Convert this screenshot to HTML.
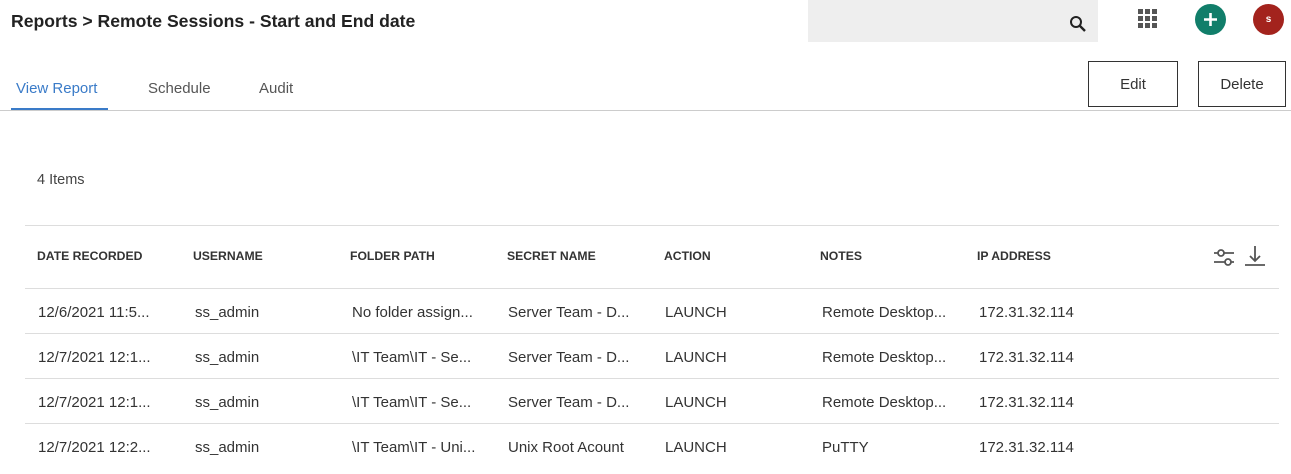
<!DOCTYPE html>
<html><head><style>
body{margin:0;width:1291px;height:474px;background:#fff;font-family:"Liberation Sans",Arial,sans-serif;position:relative;overflow:hidden;color:#222}
.a{position:absolute;white-space:nowrap}
.h{font-size:12.2px;font-weight:bold;color:#333;top:249px}
.d{font-size:15px;color:#333}
.line{position:absolute;left:25px;width:1254px;height:1px;background:#ddd}
.btn{position:absolute;top:61px;height:46px;border:1px solid #333;box-sizing:border-box;font-size:15px;display:flex;align-items:center;justify-content:center;color:#333}
</style></head><body>
<div class="a" style="left:11px;top:11px;font-size:17.6px;font-weight:bold;color:#222">Reports &gt; Remote Sessions - Start and End date</div>
<div class="a" style="left:808px;top:0;width:290px;height:42px;background:#eee"></div>
<svg class="a" style="left:1069px;top:15px" width="18" height="18" viewBox="0 0 18 18"><circle cx="7" cy="7" r="5" fill="none" stroke="#222" stroke-width="2"/><path d="M10.5 10.5L16 16" stroke="#222" stroke-width="2.4"/></svg>
<svg class="a" style="left:1138px;top:9px" width="20" height="20"><g fill="#555"><rect x="0" y="0" width="5" height="5"/><rect x="7" y="0" width="5" height="5"/><rect x="14" y="0" width="5" height="5"/><rect x="0" y="7" width="5" height="5"/><rect x="7" y="7" width="5" height="5"/><rect x="14" y="7" width="5" height="5"/><rect x="0" y="14" width="5" height="5"/><rect x="7" y="14" width="5" height="5"/><rect x="14" y="14" width="5" height="5"/></g></svg>
<div class="a" style="left:1195px;top:4px;width:31px;height:31px;border-radius:50%;background:#117e6a"></div>
<svg class="a" style="left:1195px;top:4px" width="31" height="31"><path d="M15.5 9v13M9 15.5h13" stroke="#fff" stroke-width="2.6"/></svg>
<div class="a" style="left:1253px;top:4px;width:31px;height:31px;border-radius:50%;background:#a3231d;color:#fff;font-size:10px;font-weight:bold;text-align:center;line-height:31px">s</div>
<div class="a" style="left:16px;top:80px;font-size:15px;color:#3a7bc8">View Report</div>
<div class="a" style="left:11px;top:108px;width:97px;height:3px;background:#3a7bc8"></div>
<div class="a" style="left:148px;top:80px;font-size:15px;color:#555">Schedule</div>
<div class="a" style="left:259px;top:80px;font-size:15px;color:#555">Audit</div>
<div class="a" style="left:0;top:110px;width:1291px;height:1px;background:#ccc"></div>
<div class="btn" style="left:1088px;width:90px">Edit</div>
<div class="btn" style="left:1198px;width:88px">Delete</div>
<div class="a" style="left:37px;top:172px;font-size:14.5px;color:#444">4 Items</div>
<div class="line" style="top:225px"></div>
<div class="line" style="top:288px"></div>
<div class="line" style="top:333px"></div>
<div class="line" style="top:378px"></div>
<div class="line" style="top:423px"></div>
<div class="a h" style="left:37px">DATE RECORDED</div>
<div class="a h" style="left:193px">USERNAME</div>
<div class="a h" style="left:350px">FOLDER PATH</div>
<div class="a h" style="left:507px">SECRET NAME</div>
<div class="a h" style="left:664px">ACTION</div>
<div class="a h" style="left:820px">NOTES</div>
<div class="a h" style="left:977px">IP ADDRESS</div>
<svg class="a" style="left:1212px;top:244px" width="56" height="26"><g stroke="#555" stroke-width="1.8" fill="#fff"><path d="M2 9h20M2 18h20"/><circle cx="9" cy="9" r="3"/><circle cx="16" cy="18" r="3"/><path d="M43 2v15M38 12l5 5 5-5" fill="none"/><path d="M33 21h20"/></g></svg>
<div class="a d" style="left:38px;top:304px">12/6/2021 11:5...</div><div class="a d" style="left:195px;top:304px">ss_admin</div><div class="a d" style="left:352px;top:304px">No folder assign...</div><div class="a d" style="left:508px;top:304px">Server Team - D...</div><div class="a d" style="left:665px;top:304px">LAUNCH</div><div class="a d" style="left:822px;top:304px">Remote Desktop...</div><div class="a d" style="left:979px;top:304px">172.31.32.114</div>
<div class="a d" style="left:38px;top:349px">12/7/2021 12:1...</div><div class="a d" style="left:195px;top:349px">ss_admin</div><div class="a d" style="left:352px;top:349px">\IT Team\IT - Se...</div><div class="a d" style="left:508px;top:349px">Server Team - D...</div><div class="a d" style="left:665px;top:349px">LAUNCH</div><div class="a d" style="left:822px;top:349px">Remote Desktop...</div><div class="a d" style="left:979px;top:349px">172.31.32.114</div>
<div class="a d" style="left:38px;top:394px">12/7/2021 12:1...</div><div class="a d" style="left:195px;top:394px">ss_admin</div><div class="a d" style="left:352px;top:394px">\IT Team\IT - Se...</div><div class="a d" style="left:508px;top:394px">Server Team - D...</div><div class="a d" style="left:665px;top:394px">LAUNCH</div><div class="a d" style="left:822px;top:394px">Remote Desktop...</div><div class="a d" style="left:979px;top:394px">172.31.32.114</div>
<div class="a d" style="left:38px;top:439px">12/7/2021 12:2...</div><div class="a d" style="left:195px;top:439px">ss_admin</div><div class="a d" style="left:352px;top:439px">\IT Team\IT - Uni...</div><div class="a d" style="left:508px;top:439px">Unix Root Acount</div><div class="a d" style="left:665px;top:439px">LAUNCH</div><div class="a d" style="left:822px;top:439px">PuTTY</div><div class="a d" style="left:979px;top:439px">172.31.32.114</div>
</body></html>
